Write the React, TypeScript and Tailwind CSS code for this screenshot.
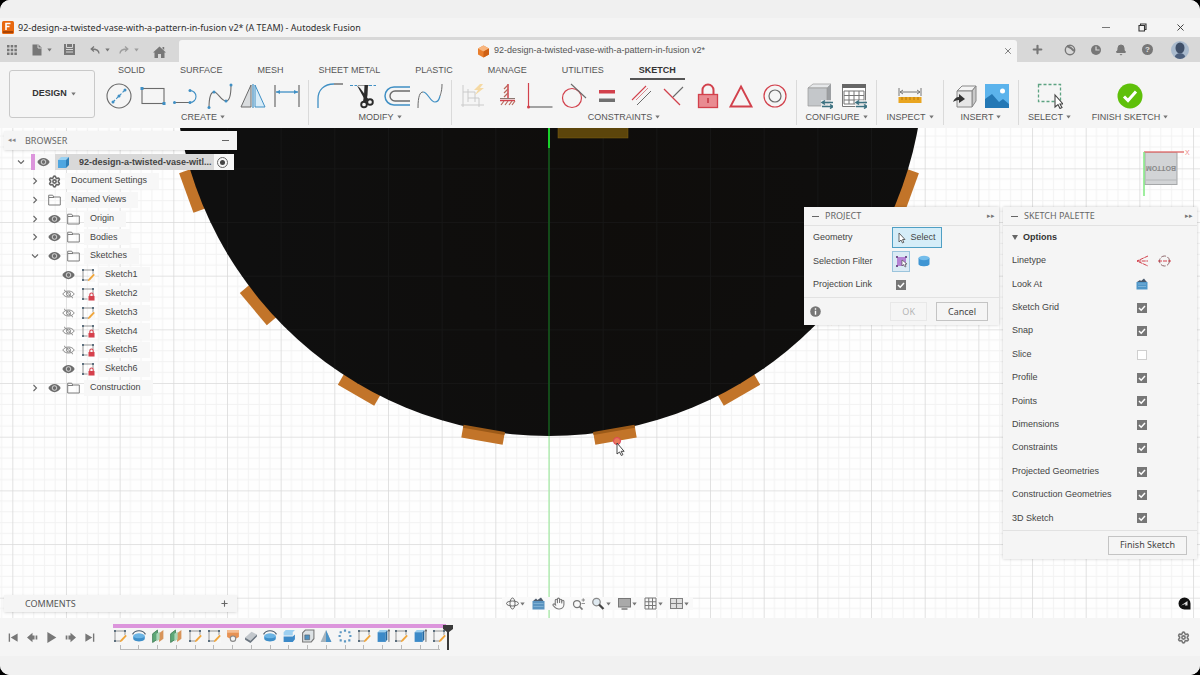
import React from "react";
import { Bell, Settings, X, Plus, Hand } from "lucide-react";

type Draw = React.ReactNode;

const BLUE = "#3f8fc4";
const RED = "#d2414c";
const GRAY = "#6b6b6b";

function Svg({ size = 26, label, children }: { size?: number; label?: string; children: Draw }) {
  return (
    <svg width={size} height={size} viewBox="0 0 26 26" fill="none" aria-label={label} className="block shrink-0">
      {children}
    </svg>
  );
}

function Caret({ className = "text-[#777]" }: { className?: string }) {
  return (
    <svg width="5" height="4" viewBox="0 0 5 4" className={`shrink-0 ${className}`}>
      <path d="M0.3 0.6h4.4L2.5 3.4z" fill="currentColor" />
    </svg>
  );
}

/* ---------- ribbon tools ---------- */

const createTools: [string, Draw][] = [
  ["Circle", <>
    <circle cx="13" cy="13" r="12" stroke={GRAY} strokeWidth="1.1" />
    <path d="M7 19L19 7" stroke={BLUE} strokeWidth="1.1" strokeDasharray="3 1.5" />
    <g fill={BLUE}><circle cx="7" cy="19" r="1.5" /><circle cx="13" cy="13" r="1.5" /><circle cx="19" cy="7" r="1.5" /></g>
  </>],
  ["Rectangle", <>
    <rect x="2" y="5.5" width="22" height="15" stroke={GRAY} strokeWidth="1.1" />
    <rect x="0.5" y="4" width="3" height="3" fill={BLUE} /><rect x="22.5" y="19" width="3" height="3" fill={BLUE} />
  </>],
  ["Line", <>
    <path d="M1 19.5h16" stroke={GRAY} strokeWidth="1.1" />
    <path d="M17 19.5a6 6 0 0 0 0-12" stroke={BLUE} strokeWidth="1.1" />
    <g fill={BLUE}><circle cx="1.5" cy="19.5" r="1.5" /><circle cx="17" cy="19.5" r="1.5" /><circle cx="17" cy="7.5" r="1.5" /></g>
  </>],
  ["Spline", <>
    <path d="M2 25C2 14 4 9 7 9c4 0 7 9 12 9 4 0 5-6 5-16" stroke={GRAY} strokeWidth="1.1" />
    <g fill={BLUE}><circle cx="2" cy="24.5" r="1.5" /><circle cx="7" cy="9" r="1.5" /><circle cx="19" cy="18" r="1.5" /><circle cx="24" cy="2" r="1.5" /></g>
  </>],
  ["Mirror", <>
    <path d="M11 2v22H1z" fill="#d9dcde" stroke={GRAY} />
    <path d="M15 2v22h10z" fill="#d8ecf8" stroke={BLUE} />
    <path d="M13 1v24" stroke={BLUE} strokeWidth="1.2" />
  </>],
  ["Sketch Dimension", <>
    <path d="M1 2v22M25 2v22" stroke={GRAY} strokeWidth="1.2" />
    <path d="M2 9h22" stroke={BLUE} strokeWidth="1.3" /><path d="M2 9l4-2v4zM24 9l-4-2v4z" fill={BLUE} />
  </>],
];

const modifyTools: [string, Draw][] = [
  ["Fillet", <>
    <path d="M1 25v-9C1 7 7 1 17 1" stroke={BLUE} strokeWidth="1.3" /><path d="M17 1h9" stroke="#555" strokeWidth="1.2" />
  </>],
  ["Trim", <>
    <path d="M0 2.5h7M19 2.5h7" stroke={BLUE} strokeDasharray="3 1.5" /><path d="M8 2.5h11" stroke="#999" />
    <path d="M7 2.5L10 5l9 12-3 2z" fill="#2b2b2b" /><path d="M14.5 2h3.500l-.5 10-1.500 8-3-1.500 1-6z" fill="#2b2b2b" />
    <circle cx="14" cy="21.5" r="2.8" stroke="#2b2b2b" strokeWidth="1.9" /><circle cx="20" cy="19" r="2.8" stroke="#2b2b2b" strokeWidth="1.9" />
  </>],
  ["Offset", <>
    <path d="M26 4H10a9 9 0 0 0 0 18h16" stroke={BLUE} strokeWidth="1.5" />
    <path d="M26 8H11a5 5 0 0 0 0 10h15" stroke={GRAY} strokeWidth="1.4" />
  </>],
  ["Curvature", <>
    <path d="M1 25C1 13 3 9 6 9" stroke={GRAY} /><path d="M6 9c5 0 7 10 12 10 4 0 4-3 5-6" stroke={BLUE} strokeWidth="1.2" /><path d="M23 13c1-3 2-6 2-12" stroke={GRAY} />
  </>],
];

const constraintTools: [string, Draw][] = [
  ["Auto Constrain", <g opacity="0.45">
    <path d="M3 2v22M1 22h23M8 6v13M3 9h12v10M8 15h11v9" stroke="#999" />
    <path d="M20 1l-6 6h4l-3 5 9-7h-4l3-4z" fill="#f5b942" />
  </g>],
  ["Horizontal/Vertical", <>
    <path d="M14 1v14M6 17.5h15" stroke={RED} strokeWidth="1.5" />
    <path d="M14 2l-4 4M14 6l-4 4M14 10l-4 4M10 18l-3 4M14 18l-3 4M18 18l-3 4M21 18l-3 4" stroke="#b8685b" strokeWidth="1.2" />
    <path d="M6 15.5h15" stroke="#8a7770" />
  </>],
  ["Perpendicular", <>
    <path d="M1.5 0v24" stroke={RED} strokeWidth="1.2" /><path d="M1.5 24h24" stroke={GRAY} strokeWidth="1.2" /><circle cx="1.5" cy="24" r="1.5" fill={RED} />
  </>],
  ["Tangent", <>
    <circle cx="11" cy="15" r="9.5" stroke={RED} strokeWidth="1.2" /><path d="M10 1l15 14" stroke={GRAY} strokeWidth="1.1" />
  </>],
  ["Equal", <><rect x="5" y="7" width="16" height="3.5" fill={RED} /><rect x="5" y="15.5" width="16" height="3.5" fill="#707070" /></>],
  ["Parallel", <><path d="M4 17L18 3" stroke={RED} strokeWidth="1.1" /><path d="M9 22L23 8" stroke={GRAY} strokeWidth="1" /><path d="M8 17L20 5" stroke="#d98a90" /></>],
  ["Midpoint", <><path d="M3 6l16 16" stroke={RED} strokeWidth="1.3" /><path d="M12 14L22 4" stroke={GRAY} strokeWidth="1.1" /></>],
  ["Fix", <>
    <path d="M7.5 12V7a5.5 5.5 0 0 1 11 0v5" stroke={RED} strokeWidth="2" /><rect x="3.5" y="11.5" width="19" height="13" fill="#e98b91" stroke={RED} strokeWidth="1.3" /><path d="M13 15v5" stroke="#c2333f" strokeWidth="1.5" />
  </>],
  ["Symmetry", <path d="M13 3.5L23.5 23.5h-21z" stroke={RED} strokeWidth="1.9" />],
  ["Concentric", <><circle cx="13" cy="13" r="11" stroke={RED} strokeWidth="1.2" /><circle cx="13" cy="13" r="6" stroke={GRAY} strokeWidth="1.2" /></>],
];

const arrowsOverlay = (
  <>
    <path d="M14 17h12v8H14z" fill="#f5f5f5" opacity="0.7" />
    <path d="M15 19.5h11M15 23.5h11M18 17.5l-3 2 3 2M23 21.5l3 2-3 2" stroke="#3c7180" strokeWidth="1.5" />
  </>
);

const configureTools: [string, Draw][] = [
  ["Configure", <>
    <path d="M1 5l5-4h18l-4 4z" fill="#e6e8ea" stroke="#9a9a9a" strokeWidth="0.7" /><path d="M20 5l4-4v18l-4 4z" fill="#9c9fa2" /><path d="M1 5h19v18H1z" fill="#c4c7ca" stroke="#999" strokeWidth="0.7" />
    {arrowsOverlay}
  </>],
  ["Configuration Table", <>
    <path d="M1.5 1.5h23v22h-23z" fill="#fff" stroke="#777" /><path d="M1 1h24v4H1z" fill="#666" /><path d="M3 8h20v13H3zM3 12.5h20M3 17h20M8 8v13M13 8v13M18 8v13" stroke="#777" />
    {arrowsOverlay}
  </>],
];

const inspectTools: [string, Draw][] = [
  ["Measure", <>
    <path d="M2 5v8M24 5v8M3 9h20M6 7L3 9l3 2M20 7l3 2-3 2" stroke="#777" /><rect x="1.5" y="14" width="23" height="6" fill="#e9a520" /><path d="M5 14v3M9 14v3M13 14v3M17 14v3M21 14v3" stroke="#b97a0c" />
  </>],
];

const insertTools: [string, Draw][] = [
  ["Insert Derive", <>
    <path d="M5 8l5-5h14l-4 5z" fill="#f4f4f4" stroke="#888" /><path d="M20 8l4-5v15l-4 6z" fill="#c9c9c9" stroke="#888" /><path d="M5 8h15v16H5z" fill="#e6e6e6" stroke="#888" />
    <path d="M1 19c1-3 3-5 6-5v-3l6 5-6 4v-3c-3 0-4 1-6 2z" fill="#333" />
  </>],
  ["Canvas", <>
    <rect x="1" y="1" width="24" height="24" fill="#5bb3ec" /><circle cx="18.5" cy="8" r="2.5" fill="#fff" /><path d="M1 25v-9l7-5 7 8 4-3 6 5v4z" fill="#2478b5" />
  </>],
];

const selectTools: [string, Draw][] = [
  ["Select", <>
    <rect x="1.5" y="1.5" width="22" height="17" stroke="#5da382" strokeWidth="1.3" strokeDasharray="3 2" /><path d="M18 12v12l3-2.5 2 4 2-1-2-3.5h3z" fill="#fff" stroke="#444" strokeWidth="1.1" />
  </>],
];

const finishTools: [string, Draw][] = [
  ["Finish Sketch", <><circle cx="13" cy="13" r="12.5" fill="#5fc00a" /><path d="M7 13.5l4 4 8-9" stroke="#fff" strokeWidth="3" /></>],
];

function Group({ label, tools, width, row, last }: { label: string; tools: [string, Draw][]; width: string; row: string; last?: boolean }) {
  return (
    <section className={`flex flex-col items-center pt-[3px] ${width} ${last ? "" : "border-r border-[#dadada]"}`}>
      <div className={`flex ${tools.length > 1 ? "justify-between" : "justify-center"} ${row}`}>
        {tools.map(([name, art]) => (
          <button key={name} type="button" aria-label={name}>
            <Svg>{art}</Svg>
          </button>
        ))}
      </div>
      <button type="button" className="flex items-center gap-[3px] pt-[2px] text-[9px] leading-3 whitespace-nowrap text-[#555]">
        {label}
        <Caret />
      </button>
    </section>
  );
}

/* ---------- browser tree ---------- */

function Eye({ off }: { off?: boolean }) {
  return (
    <svg width="13" height="10" viewBox="0 0 13 10" fill="none" className="shrink-0">
      {off ? (
        <>
          <path d="M0.8 5C3 1 10 1 12.2 5 10 9 3 9 0.8 5z" stroke="#8b8b8b" /><circle cx="6.5" cy="5" r="2" stroke="#8b8b8b" /><path d="M2 0.8l9 8.4" stroke="#8b8b8b" />
        </>
      ) : (
        <>
          <path d="M0.3 5C3 -0.5 10 -0.5 12.7 5 10 10.5 3 10.5 0.3 5z" fill="#6d6d6d" /><circle cx="6.5" cy="5" r="2.3" stroke="#e0e0e0" strokeWidth="0.9" />
        </>
      )}
    </svg>
  );
}

function Folder() {
  return (
    <svg width="13" height="12" viewBox="0 0 13 12" fill="none" className="shrink-0">
      <path d="M0.7 11V1.2h4l1 1.8h6.6v8z" stroke="#7d7d7d" /><path d="M1 3.5h5" stroke="#7d7d7d" />
    </svg>
  );
}

function SketchIcon({ lock, size = 14 }: { lock?: boolean; size?: number }) {
  return (
    <svg width={size} height={size} viewBox="0 0 14 14" fill="none" className="shrink-0">
      <path d="M2 2h10v10H2z" stroke="#8a8a8a" strokeWidth="0.9" />
      <g fill="#5c6f7e"><path d="M1 1h2v2H1zM11 1h2v2h-2zM1 11h2v2H1z" /></g>
      {lock ? (
        <><path d="M6.5 6.5H14V14H6.5z" fill="#f7f7f7" /><rect x="7.5" y="9" width="6" height="4.5" fill="#d6404c" /><path d="M8.8 9V7.7a1.7 1.7 0 0 1 3.4 0V9" stroke="#d6404c" strokeWidth="1.1" /></>
      ) : (
        <><path d="M8.5 7.5L14 5v9H7.5z" fill="#f7f7f7" /><path d="M13.8 7L9 12.2l-2.2 1 .7-2.3 5-5.2z" fill="#f0a53a" /></>
      )}
    </svg>
  );
}

function Chevron({ open }: { open?: boolean }) {
  return (
    <svg width="8" height="8" viewBox="0 0 8 8" fill="none" className="shrink-0">
      <path d={open ? "M1 2.5l3 3 3-3" : "M2.5 1l3 3-3 3"} stroke="#666" strokeWidth="1.1" />
    </svg>
  );
}

type Node = { label: string; depth: 1 | 2; kind: "gear" | "folder" | "sketch" | "locked"; eye?: "on" | "off"; open?: boolean };

const nodes: Node[] = [
  { label: "Document Settings", depth: 1, kind: "gear" },
  { label: "Named Views", depth: 1, kind: "folder" },
  { label: "Origin", depth: 1, kind: "folder", eye: "on" },
  { label: "Bodies", depth: 1, kind: "folder", eye: "on" },
  { label: "Sketches", depth: 1, kind: "folder", eye: "on", open: true },
  { label: "Sketch1", depth: 2, kind: "sketch", eye: "on" },
  { label: "Sketch2", depth: 2, kind: "locked", eye: "off" },
  { label: "Sketch3", depth: 2, kind: "sketch", eye: "off" },
  { label: "Sketch4", depth: 2, kind: "locked", eye: "off" },
  { label: "Sketch5", depth: 2, kind: "locked", eye: "off" },
  { label: "Sketch6", depth: 2, kind: "locked", eye: "on" },
  { label: "Construction", depth: 1, kind: "folder", eye: "on" },
];

function Browser() {
  return (
    <aside className="w-[233px] text-[9px] text-[#444]">
      <header className="flex h-[19px] items-center gap-[9px] bg-[#f5f5f5] pr-2 pl-1 shadow-sm">
        <span className="w-2 text-[7px] text-[#888]">◂◂</span>
        <h2 className="flex-1 font-['Noto_Sans',sans-serif] text-[#666]">BROWSER</h2>
        <button type="button" aria-label="Collapse browser" className="h-px w-[7px] bg-[#666]" />
      </header>
      <ul className="mt-[3px] grid h-[244px] auto-rows-fr">
        <li className="flex items-center pl-[13px]">
          <Chevron open />
          <div className="ml-[6px] flex h-4 w-[203px] items-center bg-[#f7f7f7]">
            <span className="h-full w-[4px] bg-[#dc95dc]" />
            <span className="ml-[2px]"><Eye /></span>
            <span className="ml-[5px] flex h-full w-[159px] items-center gap-[9px] bg-[#d9d9d9] pl-[2px]">
              <svg width="13" height="13" viewBox="0 0 13 13" className="shrink-0">
                <path d="M1 4l3-3h8L9 4z" fill="#9ad2f3" /><path d="M9 4l3-3v8l-3 3z" fill="#2f7fb8" /><path d="M1 4h8v8H1z" fill="#4fa6e0" />
              </svg>
              <strong className="truncate whitespace-nowrap">92-design-a-twisted-vase-witl...</strong>
            </span>
            <span className="ml-[3px] grid size-[11px] place-items-center rounded-full border border-[#666]">
              <span className="size-[5px] rounded-full bg-[#444]" />
            </span>
          </div>
        </li>
        {nodes.map((n) => (
          <li key={n.label} className={`flex items-center gap-[9px] ${n.depth === 1 ? "pl-[27px]" : "pl-[58px]"}`}>
            {n.depth === 1 && <Chevron open={n.open} />}
            <span className="flex h-4 items-center gap-[6px]">
              {n.eye && <Eye off={n.eye === "off"} />}
              {n.kind === "gear" && <Settings size={13} color="#666" strokeWidth={3} />}
              {n.kind === "folder" && <Folder />}
              {n.kind === "sketch" && <SketchIcon />}
              {n.kind === "locked" && <SketchIcon lock />}
            </span>
            <span className="-ml-[5px] flex h-4 items-center bg-[#f7f7f7] pr-[12px] pl-[6px]">{n.label}</span>
          </li>
        ))}
      </ul>
    </aside>
  );
}

/* ---------- dialogs ---------- */

function Check({ id, on }: { id: string; on: boolean }) {
  return (
    <span className="relative block size-[10px]">
      <input id={id} type="checkbox" defaultChecked={on} className="peer block size-[10px] appearance-none border border-[#cfcfcf] bg-white checked:border-[#777] checked:bg-[#777]" />
      <svg viewBox="0 0 10 10" fill="none" className="pointer-events-none absolute inset-0 hidden size-[10px] peer-checked:block">
        <path d="M2 5l2.2 2.2L8 3" stroke="#fff" strokeWidth="1.5" />
      </svg>
    </span>
  );
}

function PanelHeader({ title }: { title: string }) {
  return (
    <header className="flex h-[19px] items-center gap-[6px] border-b border-[#e2e2e2] pr-1 pl-2">
      <span className="h-px w-[7px] bg-[#666]" />
      <h2 className="flex-1 font-['Noto_Sans',sans-serif] text-[9px] text-[#666]">{title}</h2>
      <span className="text-[7px] text-[#777]">▸▸</span>
    </header>
  );
}

const panel = "bg-[#f5f5f5] text-[9px] text-[#444] shadow-[0_0_3px_rgba(0,0,0,0.2)]";
const btn = "h-[19px] border px-[11px] font-['Noto_Sans',sans-serif] text-[9px] leading-3";

function ProjectPanel() {
  return (
    <section className={`w-[195px] ${panel}`}>
      <PanelHeader title="PROJECT" />
      <div className="grid h-[71px] auto-rows-fr grid-cols-[79px_1fr] items-center pl-[9px]">
        <span>Geometry</span>
        <button type="button" className="flex h-[21px] w-[50px] items-center justify-center gap-1 border border-[#4f9fc4] bg-[#d5edf8]">
          <svg width="8" height="12" viewBox="0 0 8 12"><path d="M1 1v9l2-2 1.5 3 1.3-.7L4.5 7.5H7z" fill="#fff" stroke="#555" strokeWidth="0.9" /></svg>
          Select
        </button>
        <span>Selection Filter</span>
        <span className="flex items-center gap-2">
          <button type="button" aria-label="Specified entities" className="grid h-[21px] w-[18px] place-items-center border border-[#9bc4dc] bg-[#dbeaf4]">
            <svg width="13" height="13" viewBox="0 0 13 13"><path d="M2 2h9v9H2z" fill="#b583d4" /><path d="M1 1h2v2H1zM10 1h2v2h-2zM1 10h2v2H1z" fill="#75528e" /><path d="M7 5v6l1.5-1.5L10 12l1-.5-1-2.500h2z" fill="#fff" stroke="#555" strokeWidth="0.7" /></svg>
          </button>
          <button type="button" aria-label="Bodies">
            <svg width="12" height="12" viewBox="0 0 12 12"><path d="M0.5 3v6c0 3 11 3 11 0V3z" fill="#3f95d3" /><ellipse cx="6" cy="3" rx="5.5" ry="2.2" fill="#74bdeb" /></svg>
          </button>
        </span>
        <label htmlFor="projection-link">Projection Link</label>
        <span className="pl-1"><Check id="projection-link" on /></span>
      </div>
      <footer className="flex h-[28px] items-center border-t border-[#e2e2e2] pr-[11px] pl-[6px]">
        <svg width="11" height="11" viewBox="0 0 11 11"><circle cx="5.5" cy="5.5" r="5.3" fill="#777" /><path d="M4.8 4.8h1.4v4H4.8zM4.8 2.3h1.4v1.4H4.8z" fill="#fff" /></svg>
        <button type="button" disabled className={`ml-auto border-[#e8e8e8] text-[#b5b5b5] ${btn}`}>OK</button>
        <button type="button" className={`ml-[9px] border-[#c4c4c4] text-[#444] ${btn}`}>Cancel</button>
      </footer>
    </section>
  );
}

const options: [string, boolean][] = [
  ["Sketch Grid", true], ["Snap", true], ["Slice", false], ["Profile", true], ["Points", true],
  ["Dimensions", true], ["Constraints", true], ["Projected Geometries", true], ["Construction Geometries", true], ["3D Sketch", true],
];

function LookAt({ size = 12 }: { size?: number }) {
  return (
    <svg width={size} height={size} viewBox="0 0 12 12"><path d="M0.5 4h11v7.5H.5z" fill="#4f96c8" /><path d="M1 4l3-2 1 1 3-2.5 1.5 2L11 4z" fill="#46566a" /><path d="M2 6h8M2 8.5h8" stroke="#8fc0e2" strokeWidth="0.7" /></svg>
  );
}

function SketchPalette() {
  return (
    <section className={`w-[194px] ${panel}`}>
      <PanelHeader title="SKETCH PALETTE" />
      <div className="grid h-[304px] auto-rows-fr items-center pl-[9px]">
        <h3 className="flex items-center gap-[5px] font-bold text-[#333]">
          <svg width="6" height="5" viewBox="0 0 6 5"><path d="M0 0h6L3 5z" fill="#666" /></svg>
          Options
        </h3>
        <div className="flex items-center">
          <span className="w-[124px]">Linetype</span>
          <button type="button" aria-label="Construction">
            <svg width="12" height="12" viewBox="0 0 12 12" fill="none"><path d="M12 1L1 6l11 5M1 6h11" stroke={RED} strokeDasharray="4 0.7" /></svg>
          </button>
          <button type="button" aria-label="Centerline" className="ml-[10px]">
            <svg width="13" height="12" viewBox="0 0 13 12" fill="none"><circle cx="6.5" cy="6" r="5" stroke="#8c6468" strokeDasharray="5 1.5" /><path d="M0 6h13" stroke={RED} strokeDasharray="4 1" /></svg>
          </button>
        </div>
        <div className="flex items-center"><span className="w-[124px]">Look At</span><button type="button" aria-label="Look at sketch"><LookAt /></button></div>
        {options.map(([name, on]) => {
          const id = name.toLowerCase().replace(/ /g, "-");
          return (
            <div key={name} className="flex items-center">
              <label htmlFor={id} className="w-[125px]">{name}</label>
              <Check id={id} on={on} />
            </div>
          );
        })}
      </div>
      <footer className="flex h-[29px] items-center justify-end border-t border-[#e2e2e2] pr-[10px]">
        <button type="button" className={`border-[#c4c4c4] text-[#444] ${btn}`}>Finish Sketch</button>
      </footer>
    </section>
  );
}

/* ---------- drawing area ---------- */

function Scene() {
  return (
    <svg viewBox="0 128 1200 490" preserveAspectRatio="xMidYMin slice" className="absolute inset-0 size-full" aria-label="Sketch canvas">
      <defs>
        <pattern id="grid" x="549" y="61" width="53.67" height="53.67" patternUnits="userSpaceOnUse">
          <path d="M10.73 0v54M21.47 0v54M32.2 0v54M42.93 0v54M0 10.73h54M0 21.47h54M0 32.2h54M0 42.93h54" stroke="#f2f2f2" />
          <path d="M0 0v54M0 0h54" stroke="#dadada" strokeWidth="1.6" />
        </pattern>
        <pattern id="darkgrid" x="549" y="61" width="53.67" height="53.67" patternUnits="userSpaceOnUse">
          <path d="M0 0v54M0 0h54" stroke="#171717" strokeWidth="1.6" />
        </pattern>
        <radialGradient id="body" cx="0.6" cy="0.7" r="0.5">
          <stop offset="0" stopColor="#0f0d0b" /><stop offset="1" stopColor="#0f0f0f" />
        </radialGradient>
      </defs>
      <rect y="128" width="1200" height="490" fill="#fefefe" />
      <rect y="128" width="1200" height="490" fill="url(#grid)" />
      {[-70, -50, -30, -10, 10, 30, 50, 70].map((a) => (
        <rect key={a} x="528" y="430" width="42" height="17" fill="#c27429" transform={`rotate(${a} 549 61)`} />
      ))}
      <circle cx="549" cy="61" r="375" fill="url(#body)" />
      <circle cx="549" cy="61" r="375" fill="url(#darkgrid)" />
      {[-10, 10].map((a) => (
        <rect key={a} x="528" y="434" width="42" height="3" fill="#9c5a18" transform={`rotate(${a} 549 61)`} />
      ))}
      <rect x="558" y="127" width="70" height="11" fill="#5c450b" stroke="#806312" strokeWidth="0.5" />
      <path d="M549 436v182" stroke="#a5eda5" strokeWidth="1.2" />
      <path d="M549 148v288" stroke="#14591c" strokeWidth="1.6" />
      <path d="M549 128v20" stroke="#19d22b" strokeWidth="2" />
      <circle cx="617" cy="441" r="3.5" fill="#e8795a" stroke="#e0455a" />
      <path d="M617 443v11l2.5-2 1.8 3.5 1.6-.8-1.8-3.4h3z" fill="#fff" stroke="#333" strokeWidth="0.9" />
    </svg>
  );
}

function ViewCube() {
  return (
    <svg width="54" height="52" viewBox="0 0 54 52" fill="none" aria-label="View cube">
      <rect x="5" y="4.5" width="32" height="32" fill="#d2d4d6" stroke="#a5a7a9" /><path d="M6 32h31" stroke="#b4b6b8" />
      <path d="M4 4h40" stroke="#e27878" strokeWidth="1.5" /><path d="M4 4v44" stroke="#7fe87f" strokeWidth="1.5" />
      <text x="45" y="7" fontSize="7" fill="#ef8a8a" fontFamily="Liberation Sans, sans-serif">X</text>
      <text transform="rotate(180 21 20)" x="21" y="22" textAnchor="middle" fontSize="7" fontWeight="bold" fill="#888" fontFamily="Liberation Sans, sans-serif">BOTTOM</text>
    </svg>
  );
}

const navTools: [string, Draw, boolean][] = [
  ["Orbit", <><ellipse cx="13" cy="13" rx="12" ry="5" stroke="#666" strokeWidth="2" /><ellipse cx="13" cy="13" rx="5" ry="11" stroke="#666" strokeWidth="2" /></>, true],
  ["Look At", <><path d="M1 8h24v17H1z" fill="#5a93c0" /><path d="M2 8l6-5 3 3 7-5 5 7z" fill="#4e5b6b" /><path d="M3 13h20M3 19h20" stroke="#8ab8da" strokeWidth="1.5" /></>, false],
  ["Pan", <Hand x={0} y={0} width={26} height={26} color="#777" strokeWidth={2} />, false],
  ["Zoom", <><circle cx="10" cy="14" r="7" stroke="#777" strokeWidth="2.5" /><path d="M15 19l6 6" stroke="#777" strokeWidth="3.5" /><path d="M19 6h7M22.5 2.5v7M19 13h7" stroke="#777" strokeWidth="1.6" /></>, false],
  ["Fit", <><circle cx="9" cy="10" r="7.5" fill="#dfe9f0" stroke="#888" strokeWidth="2.5" /><path d="M14 15l9 9" stroke="#444" strokeWidth="4.5" /></>, true],
  ["Display Settings", <><rect x="1" y="3" width="24" height="17" fill="#a9a9a9" stroke="#777" strokeWidth="2" /><path d="M7 24h12" stroke="#777" strokeWidth="3" /></>, true],
  ["Grid and Snaps", <path d="M2 2h22v22H2zM2 9.5h22M2 17h22M9.5 2v22M17 2v22" stroke="#777" strokeWidth="2" />, true],
  ["Viewports", <path d="M1 3h24v20H1zM1 13h24M13 3v20" fill="#e0e0e0" stroke="#808080" strokeWidth="2.2" />, true],
];

/* ---------- timeline ---------- */

const dome = <><path d="M3 13v6c5 4 15 4 20 0v-6z" fill="#3f8fc9" /><path d="M2 13C5 6 21 6 24 13v5H2z" fill="#6bb4e4" /><path d="M3 15v5c5 4 15 4 20 0v-5c-5 3-15 3-20 0z" fill="#3f8fc9" /><path d="M1 10C6 1 20 1 25 10" stroke="#46586a" strokeWidth="2.2" /></>;
const plane = <><path d="M3 9l9-7v17l-9 6z" fill="#5da777" stroke="#3b7a52" strokeWidth="1.5" /><path d="M15 8l8-6v16l-8 6z" fill="#d8945a" /><path d="M10 9l6-4v14l-6 4z" fill="#a9d6b8" /></>;
const extrude = <><path d="M3 6l4-4h14l-3 4z" fill="#9bcff0" /><path d="M3 6h15v18H3z" fill="#3c8ac8" /><path d="M18 6l3-4v17l-3 5z" fill="#25689e" /><path d="M24 24V2M22 5l2-4 2 4" stroke="#555" strokeWidth="1.5" /></>;
const features: (Draw | "sketch")[] = [
  "sketch", dome, plane, plane, "sketch", "sketch",
  <><path d="M2 2h22v13l-6 3a5 5 0 0 0-10 0l-6-3z" fill="#e79254" /><path d="M2 2h22v5H2z" fill="#f5bd92" /><circle cx="13" cy="18" r="5" stroke="#888" strokeWidth="2" /></>,
  <><path d="M2 16L14 5l10 5-12 12z" fill="#c2c7cc" /><path d="M2 16l10 6v4L2 20zM24 10v4L12 26v-4z" fill="#6c7680" /></>,
  dome,
  <><path d="M3 6l4-4h17l-4 4v6H3z" fill="#9ed0f1" /><path d="M3 14h17l4-4v9l-4 5H3z" fill="#3c8ac8" /></>,
  <><path d="M3 7l5-5h16v16l-5 6H3z" fill="#dde2e5" stroke="#777" strokeWidth="2" /><path d="M7 11h9v9H7z" fill="#4f90bf" stroke="#555" /></>,
  <><path d="M13 2L3 24h20z" fill="#a5b3bd" /><path d="M13 2v22h10z" fill="#4b93c8" /></>,
  <g fill="#5c97c2"><path d="M11 1h4v4h-4zM19 4h4v4h-4zM21 11h4v4h-4zM19 19h4v4h-4zM11 21h4v4h-4zM3 19h4v4H3zM1 11h4v4H1zM3 4h4v4H3z" /></g>,
  "sketch", extrude, "sketch", extrude, "sketch",
];

const transport: [string, string][] = [
  ["Go to start", "M1 2h2v12H1zM14 2v12L4 8z"],
  ["Step back", "M0 8l8-7v4h3v6H8v4zM12.5 5h2.5v6h-2.500z"],
  ["Play", "M2 0l13 8-13 8z"],
  ["Step forward", "M16 8L8 1v4H5v6h3v4zM1 5h2.5v6H1z"],
  ["Go to end", "M13 2h2v12h-2zM2 2v12l10-6z"],
];

function Timeline() {
  return (
    <footer className="bg-[#f1f1f1] pb-[19px]">
      <div className="flex h-[38px] items-center bg-[#f5f5f5] pr-[10px] pl-2">
        <div className="flex gap-2">
          {transport.map(([name, d]) => (
            <button key={name} type="button" aria-label={name}>
              <svg width="11" height="11" viewBox="0 0 16 16"><path d={d} fill="#777" /></svg>
            </button>
          ))}
        </div>
        <div className="ml-[18px] flex items-start">
          <div className="w-[333px]">
            <div className="h-1 bg-[#dc95dc]" />
            <div className="flex justify-between pt-px">
              {features.map((f, i) => (
                <button key={i} type="button" aria-label={`Feature ${i + 1}`} className="flex flex-col items-center gap-[2px]">
                  {f === "sketch" ? <SketchIcon /> : <Svg size={14}>{f}</Svg>}
                  <span className="h-1 w-px bg-[#b9b9b9]" />
                </button>
              ))}
            </div>
            <div className="mr-[6px] ml-[7px] h-px bg-[#b9b9b9]" />
          </div>
          <svg width="10" height="26" viewBox="0 0 10 26" aria-label="Timeline marker" className="-ml-[3px]"><path d="M0 1h10v4L6 8v18H4V8L0 5z" fill="#3a3a3a" /></svg>
        </div>
        <button type="button" aria-label="Timeline settings" className="ml-auto"><Settings size={13} color="#777" strokeWidth={3} /></button>
      </div>
    </footer>
  );
}

/* ---------- page ---------- */

const tabs = ["SOLID", "SURFACE", "MESH", "SHEET METAL", "PLASTIC", "MANAGE", "UTILITIES", "SKETCH"];

export default function App() {
  return (
    <div className="min-h-screen bg-black">
      <div className="flex min-h-screen flex-col overflow-hidden rounded-[10px] bg-white font-['Liberation_Sans',Arial,sans-serif]">
        <div className="h-[18px] bg-[#f0f0f0]" />
        <header className="flex h-[19px] items-center bg-[#f4f4f4] pr-[14px] pl-[2px]">
          <svg width="12" height="13" viewBox="0 0 12 13"><rect width="12" height="13" rx="1.5" fill="#e8680f" /><path d="M1 10h10v2H1z" fill="#a84405" /><path d="M4 9V2.5h4.5M4 5.5h3.5" stroke="#fff" strokeWidth="1.6" fill="none" /></svg>
          <h1 className="ml-1 flex-1 font-['Noto_Sans',sans-serif] text-[9px] text-[#2d2d2d]">92-design-a-twisted-vase-with-a-pattern-in-fusion v2* (A TEAM) - Autodesk Fusion</h1>
          <div className="flex items-center gap-7">
            <button type="button" aria-label="Minimize" className="h-px w-2 bg-[#777]" />
            <button type="button" aria-label="Restore"><svg width="9" height="9" viewBox="0 0 9 9" fill="none"><path d="M1 2.5h5.5V8H1zM2.5 2.5V1H8v5.5H6.500" stroke="#333" strokeWidth="1.1" /></svg></button>
            <button type="button" aria-label="Close"><X size={11} color="#333" /></button>
          </div>
        </header>

        <div className="flex h-[25px] bg-[#d8d8d8]">
          <div className="flex w-[179px] items-center pl-[7px] text-[#777]">
            <button type="button" aria-label="Apps"><svg width="10" height="10" viewBox="0 0 10 10"><path d="M0 0h2.5v2.5H0zM3.7 0h2.5v2.5H3.7zM7.4 0h2.5v2.5H7.4zM0 3.7h2.5v2.5H0zM3.7 3.7h2.5v2.5H3.7zM7.4 3.7h2.5v2.5H7.4zM0 7.4h2.5v2.5H0zM3.7 7.4h2.5v2.5H3.7zM7.4 7.4h2.5v2.5H7.4z" fill="currentColor" /></svg></button>
            <button type="button" aria-label="File" className="ml-[15px] flex items-center gap-[5px]">
              <svg width="10" height="12" viewBox="0 0 10 12"><path d="M0.5 0.5h6l3 3v8h-9z" fill="currentColor" /><path d="M6 0.5V4h3.5" stroke="#d8d8d8" fill="none" /></svg>
              <Caret />
            </button>
            <button type="button" aria-label="Save" className="ml-3"><svg width="11" height="11" viewBox="0 0 11 11"><path d="M0 0h11v11H0z" fill="currentColor" /><path d="M2.5 0v3.5h6V0M2 8h7M2 5.5h7" stroke="#d8d8d8" fill="none" /></svg></button>
            <button type="button" aria-label="Undo" className="ml-[15px] flex items-center gap-[5px]">
              <svg width="10" height="8" viewBox="0 0 10 8" fill="none"><path d="M9 7.5C9 4 6 3 1.5 3M4 0.5L1.2 3 4 5.5" stroke="currentColor" strokeWidth="1.3" /></svg>
              <Caret />
            </button>
            <button type="button" aria-label="Redo" className="ml-[9px] flex items-center gap-[5px] opacity-60">
              <svg width="10" height="8" viewBox="0 0 10 8" fill="none"><path d="M1 7.5C1 4 4 3 8.5 3M6 0.5L8.8 3 6 5.5" stroke="currentColor" strokeWidth="1.3" /></svg>
              <Caret />
            </button>
            <button type="button" aria-label="Home" className="mt-1 ml-[14px]">
              <svg width="13" height="12" viewBox="0 0 13 12"><path d="M6.5 0.5L13 6.5h-1.5V12H8V8H5v4H1.5V6.5H0zM9.5 1h1.7v3L9.5 2.5z" fill="currentColor" /></svg>
            </button>
          </div>
          <div className="mt-[3px] flex flex-1 items-center rounded-t-[3px] bg-[#f5f5f5] pr-1 text-[#555]">
            <div className="flex flex-1 items-center justify-center gap-1 text-[9px]">
              <svg width="13" height="13" viewBox="0 0 13 13"><path d="M6.5 0.5l5.5 3v6l-5.5 3-5.5-3v-6z" fill="#e97e2c" /><path d="M6.5 0.5l5.5 3-5.5 3-5.5-3z" fill="#f8b67f" /><path d="M6.5 6.5l5.5-3v6l-5.5 3z" fill="#cf6014" /></svg>
              <span>92-design-a-twisted-vase-with-a-pattern-in-fusion v2*</span>
            </div>
            <button type="button" aria-label="Close document"><X size={10} color="#666" /></button>
          </div>
          <div className="flex w-[183px] items-center pl-[14px] text-[#777]">
            <button type="button" aria-label="New tab"><Plus size={13} strokeWidth={4} /></button>
            <button type="button" aria-label="Extensions" className="ml-[20px]"><svg width="12" height="12" viewBox="0 0 12 12" fill="none"><circle cx="6" cy="6" r="4.7" stroke="currentColor" strokeWidth="1.4" /><path d="M3 2l4 2 3 3" stroke="currentColor" strokeWidth="2" /></svg></button>
            <button type="button" aria-label="Job status" className="ml-[14px]"><svg width="12" height="12" viewBox="0 0 12 12" fill="none"><circle cx="6" cy="6" r="5" fill="currentColor" /><path d="M6 2.5V6h3.5" stroke="#d8d8d8" strokeWidth="1.2" /></svg></button>
            <button type="button" aria-label="Notifications" className="ml-[13px]"><Bell size={12} fill="#777" /></button>
            <button type="button" aria-label="Help" className="ml-[15px] grid size-[11px] place-items-center rounded-full bg-[#777] text-[8px] leading-none font-bold text-[#e0e0e0]">?</button>
            <button type="button" aria-label="Account" className="ml-[18px]"><svg width="18" height="18" viewBox="0 0 18 18"><circle cx="9" cy="9" r="9" fill="#a9bacd" /><ellipse cx="9" cy="7" rx="4.5" ry="5.5" fill="#3f4f68" /><path d="M4 16c0-5 10-5 10 0-3 2.5-7 2.5-10 0z" fill="#4c5f7c" /></svg></button>
          </div>
        </div>

        <div className="flex h-[66px] bg-[#f5f5f5]">
          <button type="button" className="mt-2 ml-[9px] flex h-12 w-[86px] items-center justify-center gap-1 rounded-[3px] border border-[#c9c9c9] pl-1 text-[9px] font-bold text-[#333]">
            DESIGN <Caret />
          </button>
          <div className="ml-[3px] flex-1">
            <nav className="flex h-[18px] gap-[17px] pl-[11px] text-[9px] text-[#555]">
              {tabs.map((t) => (
                <button key={t} type="button" className={`border-b-2 px-[9px] pt-[2px] whitespace-nowrap ${t === "SKETCH" ? "border-[#555] font-bold text-[#333]" : "border-transparent"}`}>{t}</button>
              ))}
            </nav>
            <div className="flex h-[45px]">
              <Group label="CREATE" tools={createTools} width="w-[211px]" row="w-[194px]" />
              <Group label="MODIFY" tools={modifyTools} width="w-[143px]" row="w-[127px]" />
              <Group label="CONSTRAINTS" tools={constraintTools} width="w-[345px]" row="w-[328px]" />
              <Group label="CONFIGURE" tools={configureTools} width="w-[80px]" row="w-[60px]" />
              <Group label="INSPECT" tools={inspectTools} width="w-[67px]" row="w-[26px]" />
              <Group label="INSERT" tools={insertTools} width="w-[75px]" row="w-[58px]" />
              <Group label="SELECT" tools={selectTools} width="w-[61px]" row="w-[26px]" last />
              <Group label="FINISH SKETCH" tools={finishTools} width="w-[100px]" row="w-[26px]" last />
            </div>
          </div>
        </div>

        <main className="relative flex flex-1 flex-col">
          <Scene />
          <div className="relative flex flex-1 items-start justify-between pt-[3px] pr-[3px] pl-1">
            <Browser />
            <div className="flex flex-col items-end pt-[17px]">
              <div className="h-[59px] pr-[3px]"><ViewCube /></div>
              <div className="flex items-start gap-1">
                <ProjectPanel />
                <SketchPalette />
              </div>
            </div>
          </div>
          <div className="relative grid grid-cols-[1fr_auto_1fr] items-center pr-[9px] pb-[6px] pl-1">
            <div className="flex h-[17px] w-[233px] items-center justify-between bg-[#f5f5f5] pr-2 pl-[21px] font-['Noto_Sans',sans-serif] text-[9px] text-[#555] shadow-sm">
              <span>COMMENTS</span>
              <button type="button" aria-label="Add comment"><Plus size={9} strokeWidth={3} color="#666" /></button>
            </div>
            <div className="flex items-center gap-[7px] bg-[#f9f9f9] px-1">
              {navTools.map(([name, art, menu]) => (
                <button key={name} type="button" aria-label={name} className="flex items-center gap-px">
                  <Svg size={13}>{art}</Svg>
                  {menu && <Caret />}
                </button>
              ))}
            </div>
            <button type="button" aria-label="Assistant" className="justify-self-end">
              <svg width="13" height="13" viewBox="0 0 13 13"><path d="M6.5 0.5a6 6 0 0 1 6 6v6h-6a6 6 0 0 1 0-12z" fill="#111" /><path d="M3 8.5L9.5 4v4.5H7L7.5 7z" fill="#ddd" /></svg>
            </button>
          </div>
        </main>
        <Timeline />
      </div>
    </div>
  );
}
